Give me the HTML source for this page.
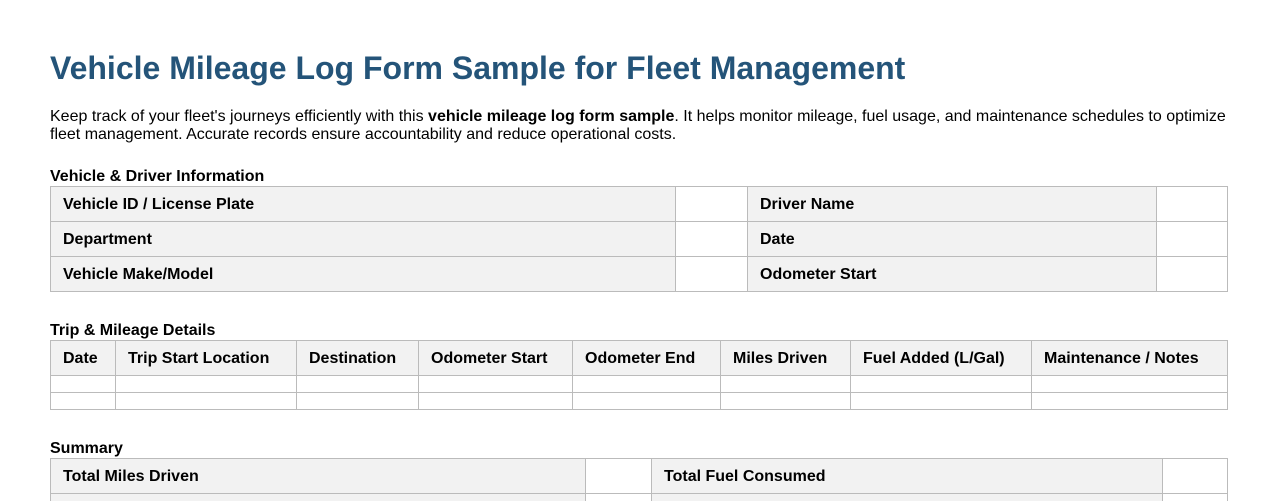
<!DOCTYPE html>
<html><head><style>
body{margin:0;background:#fff;font-family:"Liberation Sans",Arial,sans-serif;color:#000;}
.wrap{position:relative;width:1278px;height:501px;overflow:hidden;}
h1{position:absolute;left:50px;top:50px;margin:0;font-size:32px;font-weight:bold;color:#245479;white-space:nowrap;}
p{position:absolute;left:50px;top:108px;width:1185px;margin:0;font-size:16px;line-height:18px;}
.h{position:absolute;left:50px;margin:0;font-size:16px;font-weight:bold;}
table{position:absolute;left:50px;border-collapse:collapse;table-layout:fixed;font-size:16px;}
td,th{border:1px solid #bbb;padding:1px 0 0 12px;font-weight:bold;text-align:left;}
.g{background:#f2f2f2;}
</style></head><body><div class="wrap">
<h1>Vehicle Mileage Log Form Sample for Fleet Management</h1>
<p>Keep track of your fleet's journeys efficiently with this <b>vehicle mileage log form sample</b>. It helps monitor mileage, fuel usage, and maintenance schedules to optimize fleet management. Accurate records ensure accountability and reduce operational costs.</p>
<div class="h" style="top:168px">Vehicle &amp; Driver Information</div>
<table style="top:186px;width:1177px">
<colgroup><col style="width:625px"><col style="width:72px"><col style="width:409px"><col style="width:71px"></colgroup>
<tr style="height:35px"><td class="g">Vehicle ID / License Plate</td><td></td><td class="g">Driver Name</td><td></td></tr>
<tr style="height:35px"><td class="g">Department</td><td></td><td class="g">Date</td><td></td></tr>
<tr style="height:35px"><td class="g">Vehicle Make/Model</td><td></td><td class="g">Odometer Start</td><td></td></tr>
</table>
<div class="h" style="top:322px">Trip &amp; Mileage Details</div>
<table style="top:340px;width:1177px">
<colgroup><col style="width:65px"><col style="width:181px"><col style="width:122px"><col style="width:154px"><col style="width:148px"><col style="width:130px"><col style="width:181px"><col style="width:196px"></colgroup>
<tr class="g" style="height:35px"><th>Date</th><th>Trip Start Location</th><th>Destination</th><th>Odometer Start</th><th>Odometer End</th><th>Miles Driven</th><th>Fuel Added (L/Gal)</th><th>Maintenance / Notes</th></tr>
<tr style="height:17px"><td></td><td></td><td></td><td></td><td></td><td></td><td></td><td></td></tr>
<tr style="height:17px"><td></td><td></td><td></td><td></td><td></td><td></td><td></td><td></td></tr>
</table>
<div class="h" style="top:440px">Summary</div>
<table style="top:458px;width:1177px">
<colgroup><col style="width:535px"><col style="width:66px"><col style="width:511px"><col style="width:65px"></colgroup>
<tr style="height:35px"><td class="g">Total Miles Driven</td><td></td><td class="g">Total Fuel Consumed</td><td></td></tr>
<tr style="height:35px"><td class="g"></td><td></td><td class="g"></td><td></td></tr>
</table>
</div></body></html>
